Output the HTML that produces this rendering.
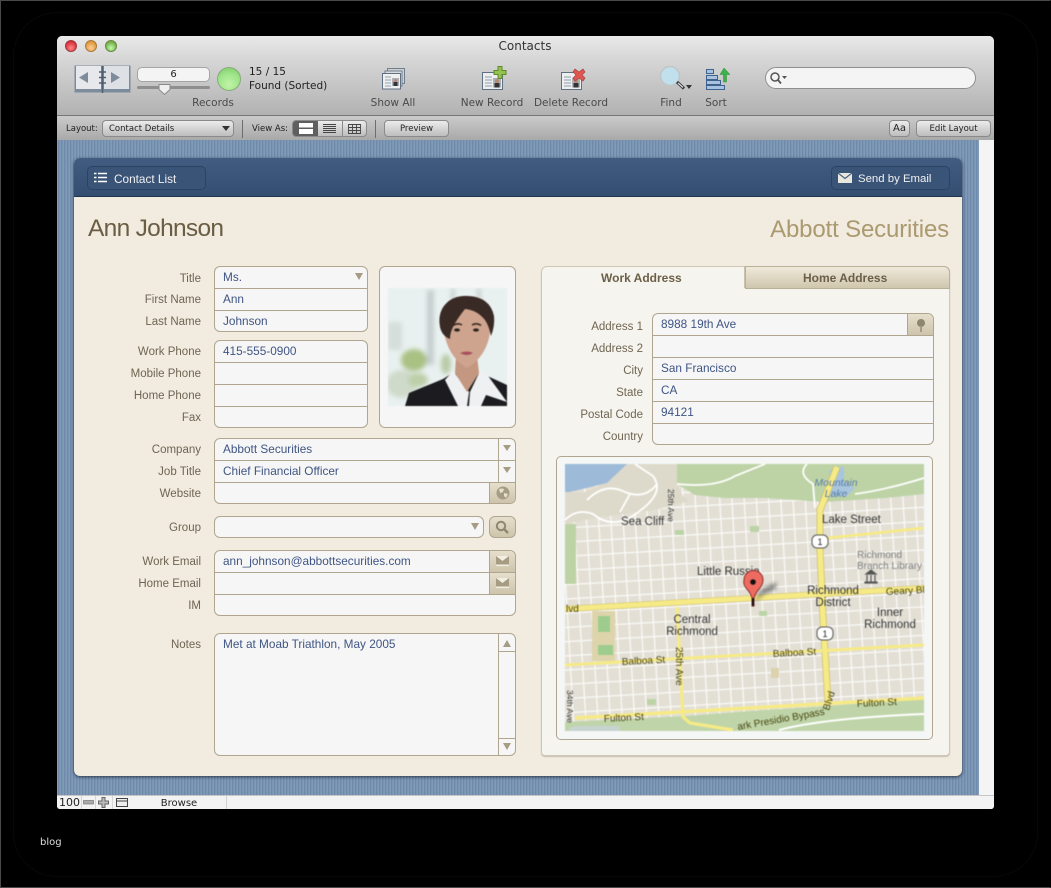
<!DOCTYPE html>
<html><head><meta charset="utf-8"><title>Contacts</title>
<style>
html,body{margin:0;padding:0;background:#000;}
#r{position:relative;width:1051px;height:888px;overflow:hidden;background:#000;font-family:"Liberation Sans",sans-serif;}
#r div,#r svg{position:absolute;box-sizing:border-box;}
.l,.v{height:14px;line-height:14px;font-size:12px;white-space:nowrap;}
.l{color:#6f6552;text-align:right;left:90px;width:111px;font-size:11.500px;line-height:16px;}
.r{left:540px;width:103px;}
.v{color:#3f5584;font-size:11.800px;}
.f{background:#f6f6f6;border:1px solid #b0a690;border-radius:6px;}
.h{height:1px;background:#b0a690;}
.w{width:1px;background:#b0a690;}
.b{background:linear-gradient(#e6dfcd,#cdc4ab);}
.tb{font-family:"DejaVu Sans",sans-serif;font-size:10.500px;color:#4a4a4a;text-align:center;height:13px;line-height:13px;white-space:nowrap;}
.s{font-family:"DejaVu Sans",sans-serif;font-size:8.500px;color:#222;height:17px;line-height:16px;text-align:center;background:linear-gradient(#ececec,#bdbdbd);border:1px solid #8a8a8a;border-radius:4px;white-space:nowrap;}
.t{font-family:"DejaVu Sans",sans-serif;font-size:8.500px;color:#222;height:12px;line-height:12px;white-space:nowrap;}
.nb{height:24px;background:#3a5478;border:1px solid #2c4263;border-radius:5px;color:#f1f1f1;font-size:11.800px;line-height:24px;}
text{font-family:"Liberation Sans",sans-serif;}
</style></head><body><div id="r">
<div style="left:0;top:0;width:1051px;height:888px;border:1px solid #4a4a4a;border-right-color:#000"></div>
<div style="left:13px;top:12px;width:1025px;height:865px;border:1px solid #080808;border-radius:44px"></div>

<!-- window -->
<div style="left:57px;top:36px;width:937px;height:773px;background:#f4f4f4;border-radius:5px 5px 3px 3px;overflow:hidden">
 <div style="left:0;top:0;width:937px;height:79px;background:linear-gradient(#e9e9e9,#d6d6d6 30%,#b2b2b2)"></div>
 <div style="left:0;top:79px;width:937px;height:1px;background:#767676"></div>
 <div style="left:0;top:80px;width:937px;height:24px;background:linear-gradient(#cbcbcb,#a9a9a9)"></div>
 <div style="left:0;top:104px;width:922px;height:655px;background:repeating-linear-gradient(90deg,#809ab9 0 1px,#7089a9 1px 2px,#7a94b3 2px 3px)"></div>
 <div style="left:0;top:759px;width:937px;height:14px;background:#f3f3f3;border-top:1px solid #c6c6c6"></div>
 <div style="left:169px;top:759px;width:1px;height:14px;background:#d2d2d2"></div>
</div>

<!-- traffic lights -->
<div style="left:65px;top:40px;width:12px;height:12px;border-radius:50%;background:radial-gradient(circle at 50% 70%,#f88 0,#d8303a 70%);border:1px solid #9c3a40"></div>
<div style="left:85px;top:40px;width:12px;height:12px;border-radius:50%;background:radial-gradient(circle at 50% 70%,#fc9 0,#dd9a3a 70%);border:1px solid #a77a3c"></div>
<div style="left:105px;top:40px;width:12px;height:12px;border-radius:50%;background:radial-gradient(circle at 50% 70%,#bfa 0,#79ad4a 70%);border:1px solid #66883f"></div>
<div style="left:425px;top:39px;width:200px;height:14px;line-height:14px;text-align:center;font-family:'DejaVu Sans',sans-serif;font-size:12px;color:#333">Contacts</div>

<!-- book -->
<svg style="left:74px;top:65px" width="57" height="29" viewBox="0 0 57 29">
 <rect x="0.500" y="0.500" width="56" height="27" fill="#7d8c9d"/>
 <rect x="2" y="1" width="25" height="23" fill="#e6e8ec"/><rect x="30" y="1" width="25" height="23" fill="#dde0e5"/>
 <path d="M14 7v11l-9-5.500zM37 7v11l9-5.500z" fill="#7e8b9a"/>
 <path d="M28.500 1V28" stroke="#4f5f72" stroke-width="1.500"/>
 <path d="M25 7h7M25 12.500h7M25 18h7" stroke="#4f5f72" stroke-width="1.500"/>
</svg>
<!-- slider -->
<div style="left:137px;top:67px;width:73px;height:15px;background:#f4f4f4;border:1px solid #a4a4a4;border-radius:5px;font:10px/13px 'DejaVu Sans',sans-serif;color:#222;text-align:center">6</div>
<div style="left:137px;top:86px;width:73px;height:3px;background:#8f8f8f;border-radius:2px"></div>
<svg style="left:158px;top:84px" width="13" height="11"><path d="M1 .5h11v5l-5.500 5-5.500-5z" fill="#efefef" stroke="#8a8a8a"/></svg>
<!-- orb -->
<div style="left:217px;top:67px;width:24px;height:24px;border-radius:50%;background:radial-gradient(circle at 50% 75%,#c0f4a8 0,#9fe48a 55%,#79c765 100%);border:1px solid #86ad78"></div>
<div class="tb" style="left:249px;top:66px;width:60px;text-align:left;color:#222">15 / 15</div>
<div class="tb" style="left:249px;top:80px;width:90px;text-align:left;color:#222">Found (Sorted)</div>
<div class="tb" style="left:183px;top:97px;width:60px">Records</div>

<!-- show all -->
<svg style="left:381px;top:67px" width="26" height="24" viewBox="0 0 26 24">
 <rect x="6.500" y="1.500" width="17" height="15" fill="#cfd0d0" stroke="#6f7f8f"/>
 <rect x="4" y="4" width="17" height="15" fill="#dcdcdc" stroke="#6f7f8f"/>
 <rect x="1.500" y="6.500" width="18" height="15.500" fill="#f0f0f0" stroke="#5f7082"/>
 <path d="M4 10h6M4 13h6M4 16h6M4 19h6" stroke="#8fa0b0"/>
 <rect x="11" y="11" width="7" height="8" fill="#a9b0b8"/><rect x="12.500" y="15" width="4" height="4" fill="#333"/><circle cx="14.500" cy="13.500" r="1.500" fill="#b98a70"/>
</svg>
<div class="tb" style="left:363px;top:97px;width:60px">Show All</div>
<!-- new record -->
<svg style="left:481px;top:66px" width="26" height="26" viewBox="0 0 26 26">
 <rect x="1.500" y="6.500" width="20" height="17" fill="#eee" stroke="#5f7082"/>
 <path d="M4 11h7M4 14h7M4 17h7M4 20h7" stroke="#8fa0b0"/>
 <rect x="12" y="12" width="8" height="9.500" fill="#a9b0b8"/><rect x="13.500" y="17" width="5" height="4.500" fill="#333"/><circle cx="16" cy="15" r="2" fill="#b98a70"/>
 <path d="M17 .5h4v4h4v4h-4v4h-4v-4h-4v-4h4z" fill="#92c24f" stroke="#5f8a2c"/>
</svg>
<div class="tb" style="left:452px;top:97px;width:80px">New Record</div>
<!-- delete record -->
<svg style="left:560px;top:66px" width="26" height="26" viewBox="0 0 26 26">
 <rect x="1.500" y="6.500" width="20" height="17" fill="#eee" stroke="#5f7082"/>
 <path d="M4 11h7M4 14h7M4 17h7M4 20h7" stroke="#8fa0b0"/>
 <rect x="12" y="12" width="8" height="9.500" fill="#a9b0b8"/><rect x="13.500" y="17" width="5" height="4.500" fill="#333"/><circle cx="16" cy="15" r="2" fill="#b98a70"/>
 <path d="M15 3l4 3 4-3 2 3-3 3 3 3-2 3-4-3-4 3-2-3 3-3-3-3z" fill="#e05650" stroke="#a8443e" stroke-width=".7"/>
</svg>
<div class="tb" style="left:526px;top:97px;width:90px">Delete Record</div>
<!-- find -->
<svg style="left:659px;top:66px" width="34" height="26" viewBox="0 0 34 26">
 <circle cx="11" cy="10" r="9.500" fill="#bfe0ec" stroke="#c2c5c8" stroke-width="1.600"/>
 <path d="M18 16l7 6.500" stroke="#333" stroke-width="3"/><path d="M19 17l5 4.500" stroke="#ddd" stroke-width="1.200"/>
 <path d="M27 19h6l-3 4z" fill="#333"/>
</svg>
<div class="tb" style="left:651px;top:97px;width:40px">Find</div>
<!-- sort -->
<svg style="left:705px;top:67px" width="27" height="25" viewBox="0 0 27 25">
 <rect x="1.500" y="2.500" width="7" height="4" fill="#a9c2e0" stroke="#3e638f"/>
 <rect x="1.500" y="8.500" width="11" height="4" fill="#a9c2e0" stroke="#3e638f"/>
 <rect x="1.500" y="13.500" width="14" height="4" fill="#a9c2e0" stroke="#3e638f"/>
 <rect x="1.500" y="18.500" width="18" height="4" fill="#a9c2e0" stroke="#3e638f"/>
 <path d="M19 1l6 6.500h-3.500V15h-3V7.500H15z" fill="#3eb24a" stroke="#2a8a36" stroke-width=".5"/>
</svg>
<div class="tb" style="left:696px;top:97px;width:40px">Sort</div>
<!-- search -->
<div style="left:765px;top:67px;width:211px;height:22px;background:#f4f4f4;border:1px solid #8f8f8f;border-radius:11px"></div>
<svg style="left:769px;top:71px" width="20" height="14"><circle cx="6" cy="6" r="4" fill="none" stroke="#555" stroke-width="1.500"/><path d="M9 9l3 3.500" stroke="#555" stroke-width="1.800"/><path d="M13 5h5l-2.500 3z" fill="#555"/></svg>

<!-- layout bar -->
<div class="t" style="left:66px;top:123px">Layout:</div>
<div class="s" style="left:102px;top:120px;width:132px;text-align:left;padding-left:6px;line-height:17px">Contact Details</div>
<svg style="left:222px;top:126px" width="8" height="5"><path d="M0 0h8l-4 5z" fill="#333"/></svg>
<div style="left:242px;top:120px;width:1px;height:18px;background:#6e6e6e"></div>
<div class="t" style="left:252px;top:123px">View As:</div>
<div class="s" style="left:292px;top:120px;width:75px"></div>
<div style="left:293px;top:121px;width:25px;height:15px;background:#5f5f5f;border-radius:3px 0 0 3px"></div>
<div style="left:342px;top:121px;width:1px;height:15px;background:#8a8a8a"></div>
<svg style="left:298px;top:123px" width="65" height="12"><rect x="1" y="0" width="14" height="4.500" fill="#fff"/><rect x="1" y="6" width="14" height="5" fill="#fff"/><path d="M25 1.500h13M25 3.500h13M25 5.500h13M25 7.500h13M25 9.500h13" stroke="#444"/><path d="M50.500 1.500h12v9h-12zM50.500 4.500h12M50.500 7.500h12M54.500 1.500v9M58.500 1.500v9" fill="none" stroke="#444" stroke-width=".9"/></svg>
<div style="left:375px;top:120px;width:1px;height:18px;background:#6e6e6e"></div>
<div class="s" style="left:384px;top:120px;width:65px;line-height:17px">Preview</div>
<div class="s" style="left:889px;top:120px;width:21px;font-size:10px">Aa</div>
<div class="s" style="left:916px;top:120px;width:75px;line-height:17px">Edit Layout</div>

<!-- card -->
<div style="left:74px;top:158px;width:888px;height:618px;background:#f1ebe0;border-radius:6px;box-shadow:0 1px 3px rgba(20,30,50,.8);overflow:hidden">
 <div style="left:0;top:0;width:888px;height:39px;background:linear-gradient(#415c80,#344e72);border-bottom:1px solid #22354f"></div>
</div>
<div class="nb" style="left:87px;top:166px;width:119px;padding-left:26px">Contact List</div>
<svg style="left:94px;top:172px" width="14" height="12"><path d="M0 1.500h2.500M0 5.500h2.500M0 9.500h2.500M4 1.500h9M4 5.500h9M4 9.500h9" stroke="#fff" stroke-width="1.600"/></svg>
<div class="nb" style="left:831px;top:166px;width:119px;padding-left:26px;font-size:11.400px">Send by Email</div>
<svg style="left:838px;top:173px" width="14" height="10"><rect width="14" height="10" fill="#e9e6dd"/><path d="M0 0l7 5.500L14 0" fill="none" stroke="#4a6080" stroke-width="1.200"/></svg>

<div style="left:88px;top:213px;height:32px;line-height:32px;font-size:24.500px;letter-spacing:-.7px;color:#6b5d43;white-space:nowrap">Ann Johnson</div>
<div style="left:649px;top:214px;width:300px;height:32px;line-height:32px;font-size:24px;letter-spacing:-.15px;color:#ab9a70;text-align:right;white-space:nowrap">Abbott Securities</div>

<!-- left labels -->
<div class="l" style="top:271px">Title</div><div class="l" style="top:292px">First Name</div><div class="l" style="top:314px">Last Name</div>
<div class="l" style="top:344px">Work Phone</div><div class="l" style="top:366px">Mobile Phone</div><div class="l" style="top:388px">Home Phone</div><div class="l" style="top:410px">Fax</div>
<div class="l" style="top:442px">Company</div><div class="l" style="top:464px">Job Title</div><div class="l" style="top:486px">Website</div>
<div class="l" style="top:520px">Group</div>
<div class="l" style="top:554px">Work Email</div><div class="l" style="top:576px">Home Email</div><div class="l" style="top:598px">IM</div>
<div class="l" style="top:637px">Notes</div>

<!-- name fields -->
<div class="f" style="left:214px;top:266px;width:154px;height:66px"></div>
<div class="h" style="left:215px;top:288px;width:152px"></div><div class="h" style="left:215px;top:310px;width:152px"></div>
<svg style="left:355px;top:273px" width="8" height="7"><path d="M0 0h8l-4 7z" fill="#a59c83"/></svg>
<div class="v" style="left:223px;top:270px">Ms.</div><div class="v" style="left:223px;top:292px">Ann</div><div class="v" style="left:223px;top:314px">Johnson</div>
<!-- phones -->
<div class="f" style="left:214px;top:340px;width:154px;height:88px"></div>
<div class="h" style="left:215px;top:362px;width:152px"></div><div class="h" style="left:215px;top:384px;width:152px"></div><div class="h" style="left:215px;top:406px;width:152px"></div>
<div class="v" style="left:223px;top:344px">415-555-0900</div>
<!-- photo -->
<div class="f" style="left:379px;top:266px;width:137px;height:162px"></div>
<svg style="left:388px;top:288px;filter:blur(.6px)" width="119" height="118" viewBox="0 0 119 118">
 <defs><filter id="b1"><feGaussianBlur stdDeviation="2.500"/></filter></defs>
 <rect width="119" height="118" fill="#e9f0f0"/>
 <g filter="url(#b1)">
  <rect x="39" y="2" width="7" height="75" fill="#c4cecd"/><rect x="63" y="0" width="4" height="14" fill="#c6d0d0"/><rect x="89" y="0" width="4" height="14" fill="#c6d0d0"/>
  <rect x="0" y="34" width="14" height="28" fill="#d6dedb"/>
  <ellipse cx="26" cy="72" rx="13" ry="11" fill="#a9c183"/><ellipse cx="14" cy="96" rx="16" ry="14" fill="#cfdaca"/><ellipse cx="30" cy="92" rx="10" ry="7" fill="#bccfa8"/><ellipse cx="58" cy="76" rx="5" ry="10" fill="#b8cba6"/>
 </g>
 <path d="M17 118l4-13 34-14 8-5h32l24 11v21z" fill="#1c1c20"/>
 <path d="M57 92l8-9 16 21-2 14h-9zM92 83l6 2 21 29-21-7-5 11h-12l1-14z" fill="#eef0f2"/>
 <path d="M68 68h21l2 17-12 19-12-19z" fill="#c49780"/>
 <path d="M55 30q0-22 24-22 25 0 24 24 0 34-24 48-24-14-24-50z" fill="#cfa48e"/>
 <path d="M52 39q-2-10 2-18 8-14 26-13 22 1 26 20 1 10-3 20-2-10-6-16-8-10-20-11-8 10-12 18-3 6-3 12-8-3-10-12z" fill="#3a2a25"/>
 <path d="M65 37.500q5-3 9-.5M84 37q5-2.500 9 .5" stroke="#3a2a22" stroke-width="1.600" fill="none"/>
 <ellipse cx="69" cy="42" rx="3" ry="1.600" fill="#2c2420"/><ellipse cx="88" cy="42" rx="3" ry="1.600" fill="#2c2420"/>
 <path d="M72 65q7-3 13 0-6 4-13 0z" fill="#a8505c"/>
</svg>
<!-- company -->
<div class="f" style="left:214px;top:438px;width:302px;height:66px"></div>
<div class="h" style="left:215px;top:460px;width:300px"></div><div class="h" style="left:215px;top:482px;width:300px"></div>
<div class="w" style="left:498px;top:439px;height:43px"></div>
<svg style="left:503px;top:445px" width="8" height="30"><path d="M0 0h8l-4 6zM0 22h8l-4 6z" fill="#a59c83"/></svg>
<div class="b" style="left:489px;top:483px;width:26px;height:20px;border-left:1px solid #b0a690;border-radius:0 0 5px 0"></div>
<svg style="left:496px;top:486px" width="14" height="14"><circle cx="7" cy="7" r="6.500" fill="#a59c83"/><path d="M3 3q3-1 5 0l-1 3-3 1zM8 7l4 1-2 4-2-2z" fill="#e6dfcd"/></svg>
<div class="v" style="left:223px;top:442px">Abbott Securities</div><div class="v" style="left:223px;top:464px">Chief Financial Officer</div>
<!-- group -->
<div class="f" style="left:214px;top:516px;width:270px;height:22px"></div>
<svg style="left:471px;top:523px" width="8" height="7"><path d="M0 0h8l-4 7z" fill="#a59c83"/></svg>
<div class="b" style="left:489px;top:516px;width:27px;height:22px;border:1px solid #b0a690;border-radius:6px"></div>
<svg style="left:495px;top:520px" width="15" height="14"><circle cx="6" cy="6" r="4.200" fill="none" stroke="#8f8670" stroke-width="2"/><path d="M9 9l4 4" stroke="#8f8670" stroke-width="2.500"/></svg>
<!-- email -->
<div class="f" style="left:214px;top:550px;width:302px;height:66px"></div>
<div class="b" style="left:489px;top:551px;width:26px;height:21px;border-left:1px solid #b0a690;border-radius:0 5px 0 0"></div>
<div class="b" style="left:489px;top:573px;width:26px;height:21px;border-left:1px solid #b0a690"></div>
<div class="h" style="left:215px;top:572px;width:300px"></div><div class="h" style="left:215px;top:594px;width:300px"></div>
<svg style="left:496px;top:556px" width="14" height="33"><g fill="#f2eee2"><rect y="0" width="13" height="10" fill="#a59c83"/><path d="M0 0h13L6.500 5z"/><rect y="22" width="13" height="10" fill="#a59c83"/><path d="M0 22h13l-6.500 5z"/><rect y="8.500" width="13" height="1.500"/><rect y="30.500" width="13" height="1.500"/></g></svg>
<div class="v" style="left:223px;top:554px">ann_johnson@abbottsecurities.com</div>
<!-- notes -->
<div class="f" style="left:214px;top:633px;width:302px;height:123px"></div>
<div class="w" style="left:498px;top:634px;height:121px"></div>
<div class="h" style="left:499px;top:651px;width:16px"></div><div class="h" style="left:499px;top:738px;width:16px"></div>
<svg style="left:503px;top:640px" width="8" height="110"><path d="M0 7h8L4 0zM0 103h8l-4 7z" fill="#a59c83"/></svg>
<div class="v" style="left:223px;top:637px">Met at Moab Triathlon, May 2005</div>

<!-- tab panel -->
<div style="left:541px;top:266px;width:409px;height:490px;background:#f6f4ee;border:1px solid #cfc8b6;border-radius:6px 6px 4px 4px;box-shadow:0 1px 1px rgba(120,110,90,.35)"></div>
<div style="left:745px;top:266px;width:205px;height:23px;background:linear-gradient(#efe9da,#cfc6ad);border:1px solid #b9b09a;border-radius:0 6px 0 0"></div>
<div style="left:744px;top:266px;width:1px;height:22px;background:#c9c1ae"></div>
<div style="left:601px;top:271px;height:14px;line-height:14px;font-size:12px;font-weight:bold;color:#6b5f48;white-space:nowrap">Work Address</div>
<div style="left:803px;top:271px;height:14px;line-height:14px;font-size:12px;font-weight:bold;color:#6b5f48;white-space:nowrap">Home Address</div>
<!-- address -->
<div class="l r" style="top:319px">Address 1</div><div class="l r" style="top:341px">Address 2</div><div class="l r" style="top:363px">City</div><div class="l r" style="top:385px">State</div><div class="l r" style="top:407px">Postal Code</div><div class="l r" style="top:429px">Country</div>
<div class="f" style="left:652px;top:313px;width:282px;height:132px"></div>
<div class="b" style="left:907px;top:314px;width:26px;height:21px;border-left:1px solid #b0a690;border-radius:0 5px 0 0"></div>
<div class="h" style="left:653px;top:335px;width:280px"></div><div class="h" style="left:653px;top:357px;width:280px"></div><div class="h" style="left:653px;top:379px;width:280px"></div><div class="h" style="left:653px;top:401px;width:280px"></div><div class="h" style="left:653px;top:423px;width:280px"></div>
<svg style="left:915px;top:318px" width="12" height="15"><circle cx="6" cy="5" r="4" fill="#8f8670"/><rect x="5" y="8" width="2" height="6" fill="#a59c83"/></svg>
<div class="v" style="left:661px;top:317px">8988 19th Ave</div><div class="v" style="left:661px;top:361px">San Francisco</div><div class="v" style="left:661px;top:383px">CA</div><div class="v" style="left:661px;top:405px">94121</div>

<!-- map -->
<div style="left:556px;top:456px;width:377px;height:284px;background:#f5f6f6;border:1px solid #b0a690;border-radius:5px"></div>
<svg style="left:565px;top:464px;filter:blur(.45px)" width="359" height="267" viewBox="0 0 359 267">
 <defs>
  <pattern id="g" width="12.200" height="14.200" patternUnits="userSpaceOnUse" patternTransform="rotate(-3.300)">
   <rect width="12.200" height="14.200" fill="#e3dfd5"/>
   <path d="M6 0V14.200" stroke="#fbfaf7" stroke-width="1.300"/><path d="M0 7H12.200" stroke="#fbfaf7" stroke-width="1.300"/>
  </pattern>
  <filter id="sh"><feGaussianBlur stdDeviation="2"/></filter>
 </defs>
 <rect width="359" height="267" fill="url(#g)"/>
 <!-- green park north -->
 <path d="M112 0H359V30L340 32 320 34 260 38 200 34 160 34 130 31 112 20z" fill="#bdd3a6"/>
 <path d="M0 28H20L38 20 60 0H112V20L118 32 125 37 90 46 60 50 30 54 0 60z" fill="#dedacb"/>
 <path d="M0 0H62L42 19 5 28H0z" fill="#9dbbd8"/>
 <path d="M0 60H11V120H0z" fill="#bdd3a6"/>
 <path d="M265 6L275 3H279L279 18 290 24 282 32 270 32 262 30z" fill="#a9c6de"/>
 <!-- winding roads -->
 <path d="M0 56Q12 44 28 50 50 68 76 46 100 28 88 12L70 0M22 36Q40 18 60 28 80 36 92 20M55 48L65 30M112 20Q150 24 170 12L200 0M242 0Q232 10 248 20L250 44M290 30Q320 26 359 14" fill="none" stroke="#fff" stroke-width="1.800"/>
 <!-- green park south -->
 <path d="M0 267V258L120 252 200 246 263 242 359 234V267z" fill="#bfd5a9"/>
 <path d="M214 266Q260 254 359 250" fill="none" stroke="#fff" stroke-width="2"/>
 <!-- small park -->
 <rect x="27" y="147" width="23" height="50" fill="#ded4ab"/><rect x="33" y="152" width="12" height="16" fill="#9ecc8f"/><rect x="33" y="181" width="15" height="10" fill="#9ecc8f"/>
 <rect x="110" y="66" width="9" height="5" fill="#bcd3a6"/><rect x="185" y="62" width="9" height="6" fill="#bcd3a6"/><rect x="194" y="147" width="8" height="5" fill="#bcd3a6"/><rect x="82" y="235" width="9" height="6" fill="#bcd3a6"/><rect x="206" y="204" width="8" height="10" fill="#ddd2ae"/>
 <!-- yellow roads -->
 <g fill="none" stroke="#cdbf6c">
  <path d="M0 145L359 124" stroke-width="6"/>
  <path d="M272 3L255 46 255 86 258 153 263 239" stroke-width="7"/>
 </g>
 <g fill="none" stroke="#f6ea86">
  <path d="M0 145L359 124" stroke-width="5"/>
  <path d="M272 3L255 46 255 86 258 153 263 239" stroke-width="5.500"/>
  <path d="M0 201L359 181" stroke-width="3"/>
  <path d="M10 254L359 234" stroke-width="3.500"/>
  <path d="M263 74L359 64" stroke-width="2.800"/>
  <path d="M112 143L118 253 125 259 168 266" stroke-width="3.200"/>
 </g>
 <!-- labels -->
 <g font-size="11.500" fill="#333">
  <text x="56" y="61">Sea Cliff</text>
  <text x="257" y="59">Lake Street</text>
  <text x="132" y="111">Little Russia</text>
  <text x="268" y="130" text-anchor="middle">Richmond</text><text x="268" y="142" text-anchor="middle">District</text>
  <text x="325" y="152" text-anchor="middle">Inner</text><text x="325" y="164" text-anchor="middle">Richmond</text>
  <text x="127" y="159" text-anchor="middle">Central</text><text x="127" y="171" text-anchor="middle">Richmond</text>
 </g>
 <g font-size="10" fill="#7d7d7d"><text x="292" y="94">Richmond</text><text x="292" y="105">Branch Library</text></g>
 <g font-size="10.500" font-style="italic" fill="#5a7ca8"><text x="271" y="22" text-anchor="middle">Mountain</text><text x="271" y="33" text-anchor="middle">Lake</text></g>
 <g font-size="10" fill="#4a4510">
  <text x="321" y="131" transform="rotate(-3 321 131)">Geary Bl</text>
  <text x="1" y="148">lvd</text>
  <text x="57" y="201" transform="rotate(-3 57 201)">Balboa St</text>
  <text x="208" y="193" transform="rotate(-3 208 193)">Balboa St</text>
  <text x="39" y="258" transform="rotate(-3 39 258)">Fulton St</text>
  <text x="292" y="243" transform="rotate(-3 292 243)">Fulton St</text>
  <text x="111" y="183" transform="rotate(90 111 183)">25th Ave</text>
  <text x="173" y="266" transform="rotate(-10 173 266)">ark Presidio Bypass</text>
  <text x="264" y="247" transform="rotate(-72 264 247)">Blvd</text>
 </g>
 <g font-size="8.500" fill="#333">
  <text x="103" y="25" transform="rotate(90 103 25)">25th Ave</text>
  <text x="2" y="226" transform="rotate(90 2 226)">34th Ave</text>
 </g>
 <!-- shields -->
 <g font-size="9" text-anchor="middle" fill="#222">
  <rect x="247" y="71" width="16" height="13" rx="5" fill="#fff" stroke="#555"/><text x="255" y="81">1</text>
  <rect x="252" y="163" width="16" height="13" rx="5" fill="#fff" stroke="#555"/><text x="260" y="173">1</text>
 </g>
 <path d="M300 119h12v-1h-12zM301 110h10l-5-4zM302 111v7M306 111v7M310 111v7" fill="#555" stroke="#555" stroke-width="1.200"/>
 <!-- pin -->
 <path d="M189 140L196 126 212 118 210 125 198 130z" fill="#444" opacity=".7" filter="url(#sh)"/>
 <path d="M187 142V134Q185 128 181 124 178 120 179 116A9.300 9.300 0 0 1 198 116Q198 120 195 124 191 128 189 134V142z" fill="#ee6b60" stroke="#8c2f2a"/>
 <rect x="187" y="134" width="2" height="8" fill="#111"/>
 <circle cx="188" cy="118" r="2.800" fill="#111"/>
 <!-- google logo stub -->
 <path d="M3 267Q5 262 12 262H55V267z" fill="#c9d2dc" opacity=".75"/>
</svg>

<!-- status -->
<div style="left:59px;top:797px;height:12px;line-height:12px;font-size:11px;color:#222;font-family:'DejaVu Sans',sans-serif">100</div>
<svg style="left:81px;top:796px" width="50" height="13"><path d="M.5 0v13M14.500 0v13M31.500 0v13" stroke="#d6d6d6"/><rect x="2.500" y="4.500" width="10" height="3.500" fill="#aaa" stroke="#777" stroke-width=".7"/><path d="M21 1.500h3v3.500h3.500v3H24v3.500h-3V8h-3.500V5H21z" fill="#bbb" stroke="#666"/><rect x="35.500" y="2.500" width="11" height="8" fill="#eee" stroke="#444"/><path d="M35.500 5h11" stroke="#444"/></svg>
<div style="left:132px;top:798px;width:94px;height:12px;line-height:12px;text-align:center;font-size:10px;color:#222;font-family:'DejaVu Sans',sans-serif">Browse</div>
<div style="left:40px;top:837px;height:12px;line-height:12px;font-size:10px;color:#ddd;font-family:'DejaVu Sans',sans-serif">blog</div>
</div></body></html>
